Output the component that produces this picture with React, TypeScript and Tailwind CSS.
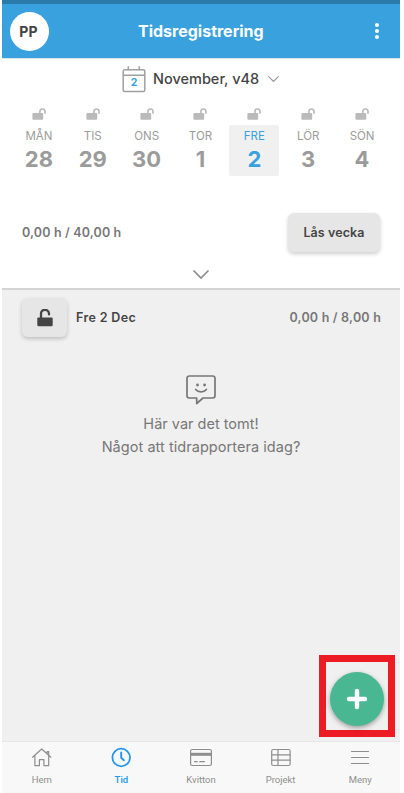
import type { ReactNode } from 'react';
import clsx from 'clsx';

const days = [
  { label: 'MÅN', date: 28 },
  { label: 'TIS', date: 29 },
  { label: 'ONS', date: 30 },
  { label: 'TOR', date: 1 },
  { label: 'FRE', date: 2, selected: true },
  { label: 'LÖR', date: 3 },
  { label: 'SÖN', date: 4 },
];

function SmallUnlockIcon() {
  return (
    <svg width="14" height="12" viewBox="0 0 14 12" fill="none">
      <rect x="0.4" y="5" width="10.8" height="6.8" rx="1" fill="#bababa" />
      <path
        d="M7.9 5.5V3.5a2.55 2.55 0 0 1 5.1 0V5.2"
        stroke="#bababa"
        strokeWidth="1.6"
        strokeLinecap="round"
      />
    </svg>
  );
}

function UnlockIcon() {
  return (
    <svg width="16" height="18" viewBox="0 0 16 18" fill="none">
      <rect x="0.3" y="8.4" width="15.4" height="8.8" rx="1.2" fill="#444" />
      <path d="M4 9V5a4 4 0 0 1 8-.5v.9" stroke="#444" strokeWidth="2.3" strokeLinecap="round" />
    </svg>
  );
}

function ChevronIcon({ className }: { className?: string }) {
  return (
    <svg className={className} viewBox="0 0 16 9" fill="none" stroke="currentColor">
      <path d="M1 1l7 7 7-7" strokeWidth="1.7" strokeLinecap="round" />
    </svg>
  );
}

function CalendarIcon() {
  return (
    <div className="relative h-[27px] w-6">
      <svg width="24" height="27" viewBox="0 0 24 27" fill="none" stroke="#a0a0a0" strokeWidth="1.5">
        <rect x="1.2" y="3.8" width="21.6" height="21.6" rx="1.5" />
        <path d="M1 9.3h22M6.3 0.2v4M17.3 0.2v4" />
      </svg>
      <span className="absolute inset-x-0 top-[11px] text-center text-[10.5px] leading-[12px] font-bold text-[#38a1de]">
        2
      </span>
    </div>
  );
}

function SmileyIcon() {
  return (
    <svg width="30" height="30" viewBox="0 0 30 30" fill="none" stroke="#777" strokeWidth="1.7">
      <path
        d="M3.2 1h23.6a2.2 2.2 0 0 1 2.2 2.2v17.6a2.2 2.2 0 0 1-2.2 2.2H17l-6.3 5.5V23H3.2A2.2 2.2 0 0 1 1 20.8V3.2A2.2 2.2 0 0 1 3.2 1z"
        strokeLinejoin="round"
      />
      <path d="M9.7 14.5c2.5 3.2 8.2 3.2 10.7 0" strokeLinecap="round" />
      <circle cx="11.5" cy="10" r="1.4" fill="#777" stroke="none" />
      <circle cx="18.6" cy="10" r="1.4" fill="#777" stroke="none" />
    </svg>
  );
}

function NavIcon({ children }: { children: ReactNode }) {
  return (
    <svg
      className="overflow-visible"
      width="20"
      height="20"
      viewBox="0 0 20 20"
      fill="none"
      stroke="currentColor"
      strokeWidth="1.2"
      strokeLinejoin="round"
      strokeLinecap="round"
    >
      {children}
    </svg>
  );
}

const navItems = [
  {
    label: 'Hem',
    icon: (
      <NavIcon>
        <path d="M0.5 9.2L9.7 1l9.2 8.2M15.2 5.8V3.5h1.5v3.7M2.9 7.6v10.1h4.500v-6h4.500v6h4.800V7.600" />
      </NavIcon>
    ),
  },
  {
    label: 'Tid',
    active: true,
    icon: (
      <NavIcon>
        <circle cx="10.2" cy="9.5" r="8.8" strokeWidth="1.8" />
        <path d="M10.2 4.5v5.3l2.7 2.4" strokeWidth="1.9" />
      </NavIcon>
    ),
  },
  {
    label: 'Kvitton',
    icon: (
      <NavIcon>
        <rect x="-0.4" y="1.5" width="20.8" height="16" rx="1.5" />
        <path d="M0 6.3h20" strokeWidth="3" strokeLinecap="butt" />
        <path d="M3.5 13.7h2.8M8.8 13.7h4.6" />
      </NavIcon>
    ),
  },
  {
    label: 'Projekt',
    icon: (
      <NavIcon>
        <rect x="0.7" y="1.5" width="18.4" height="16" rx="1.5" />
        <path d="M0.7 6.9h18.4M0.7 12.2h18.4M7 1.5v16" />
      </NavIcon>
    ),
  },
  {
    label: 'Meny',
    icon: (
      <NavIcon>
        <path d="M1.5 3.5h17M1.5 9.5h17M1.5 15.5h17" />
      </NavIcon>
    ),
  },
];

function Header() {
  return (
    <header className="flex h-[59px] items-center border-t-4 border-b border-t-[#2a7ba9] border-b-[#d6e2e9] bg-[#38a1de] pr-[21px] pl-2">
      <div className="flex h-[39px] w-[39px] items-center justify-center rounded-full bg-white pr-[2px] text-[14px] font-bold tracking-[0.2px] text-[#444]">
        PP
      </div>
      <h1 className="ml-[89px] text-[16px] font-bold text-white">Tidsregistrering</h1>
      <button aria-label="Mer" className="ml-auto flex flex-col items-center gap-[2px]">
        <span className="h-1 w-1 rounded-full bg-white" />
        <span className="h-1 w-1 rounded-full bg-white" />
        <span className="h-1 w-1 rounded-full bg-white" />
      </button>
    </header>
  );
}

function WeekPicker() {
  return (
    <section className="h-[231px] border-b-2 border-[#d4d4d4] bg-white">
      <div className="flex h-10 items-center pl-[120px]">
        <CalendarIcon />
        <span className="ml-[7px] w-[108px] text-[14.5px] font-medium whitespace-nowrap text-[#444]">
          November, v48
        </span>
        <ChevronIcon className="ml-[7px] w-[11px] text-[#999]" />
      </div>

      <div className="mr-[11px] ml-[10px] grid grid-cols-7 pt-[9px]">
        {days.map((day) => (
          <div key={day.label} className="flex flex-col items-center">
            <SmallUnlockIcon />
            <div
              className={clsx(
                'mt-[5px] flex h-[51px] w-[50px] flex-col items-center rounded-[2px] pt-[3px]',
                day.selected ? 'bg-[#f0f0f0] text-[#38a1de]' : 'text-[#9b9b9b]'
              )}
            >
              <span className="text-[11.5px] leading-4">{day.label}</span>
              <span className="mt-[3px] text-[22px] leading-6 font-bold">{day.date}</span>
            </div>
          </div>
        ))}
      </div>

      <div className="mt-[37px] flex items-center justify-between pr-[20px] pl-[20px]">
        <span className="pt-[2px] text-[12.5px] font-semibold tracking-[0.15px] text-[#777]">0,00 h / 40,00 h</span>
        <button className="h-[39px] w-[92px] rounded-[6px] bg-[#e6e6e6] pt-[2px] text-[12.5px] font-semibold tracking-[0.1px] text-[#444] shadow-[0_2px_4px_rgba(0,0,0,0.2)]">
          Lås vecka
        </button>
      </div>

      <div className="mt-[18px] flex justify-center">
        <ChevronIcon className="w-4 text-[#8b8b8b]" />
      </div>
    </section>
  );
}

function BottomNav() {
  return (
    <nav className="grid h-[52px] grid-cols-5 border-t border-[#e7e7e7] bg-[#f8f8f8] pt-[6px] font-[Roboto,sans-serif]">
      {navItems.map((item) => (
        <div
          key={item.label}
          className={clsx('flex flex-col items-center', item.active ? 'text-[#2196f3]' : 'text-[#8e8e8e]')}
        >
          {item.icon}
          <span className={clsx('mt-[6px] text-[9.5px] leading-3', item.active && 'font-medium')}>
            {item.label}
          </span>
        </div>
      ))}
    </nav>
  );
}

export default function App() {
  return (
    <div className="h-[793px] w-[404px] overflow-hidden bg-white pl-[2px] font-[Inter,sans-serif]">
      <div className="relative flex h-full w-[398px] flex-col">
        <Header />
        <WeekPicker />

        <main className="flex-1 bg-[#f0f0f0] pt-[8px]">
          <div className="flex items-center pr-[19px] pl-[20px]">
            <button
              aria-label="Lås dag"
              className="flex h-[39px] w-[45px] items-center justify-center rounded-[6px] bg-[#e6e6e6] shadow-[0_2px_4px_rgba(0,0,0,0.2)]"
            >
              <UnlockIcon />
            </button>
            <span className="ml-[9px] pt-px text-[12.5px] font-semibold tracking-[0.35px] text-[#444]">Fre 2 Dec</span>
            <span className="ml-auto pt-px text-[12.5px] font-semibold tracking-[0.2px] text-[#777]">
              0,00 h / 8,00 h
            </span>
          </div>

          <div className="mt-[38px] flex flex-col items-center text-[14.5px] text-[#777]">
            <SmileyIcon />
            <p className="mt-[7px] leading-[23px]">Här var det tomt!</p>
            <p className="leading-[23px] tracking-[0.05px]">Något att tidrapportera idag?</p>
          </div>
        </main>

        <BottomNav />

        {/* Highlighted add button */}
        <div className="absolute top-[655px] left-[317px] flex h-[82px] w-[76px] items-center justify-center border-[7px] border-[#ed1c24]">
          <button
            aria-label="Lägg till"
            className="mt-[5px] flex h-[54px] w-[54px] shrink-0 items-center justify-center rounded-full bg-[#4ab793] shadow-[0_2px_5px_rgba(0,0,0,0.35)]"
          >
            <svg width="22" height="22" viewBox="0 0 22 22" stroke="white" strokeWidth="4.4" strokeLinecap="round">
              <path d="M11 3v16M3 11h16" />
            </svg>
          </button>
        </div>
      </div>
    </div>
  );
}
